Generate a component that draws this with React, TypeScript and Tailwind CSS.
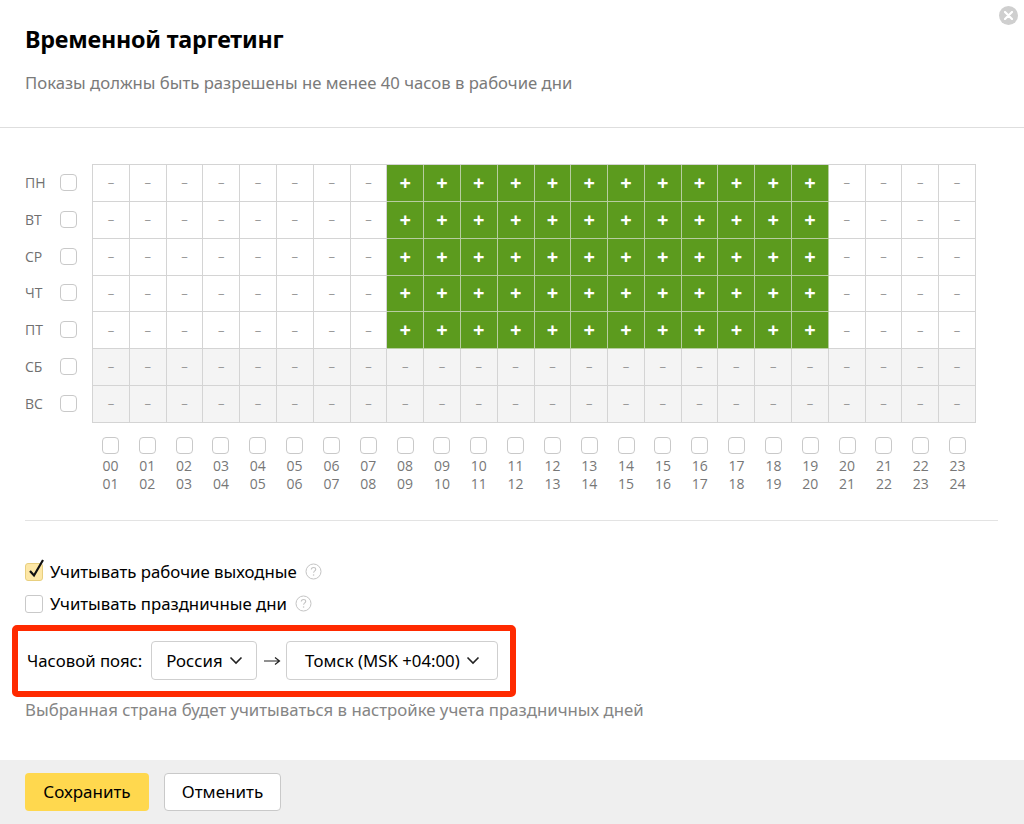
import React from "react";

const days = ["ПН", "ВТ", "СР", "ЧТ", "ПТ", "СБ", "ВС"];
const hours = Array.from({ length: 24 }, (_, i) => i);
const pad = (n: number) => (n < 10 ? "0" + n : "" + n);

function Box({ className = "" }: { className?: string }) {
  return <div className={"w-[17px] h-[17px] rounded-[4px] border border-[#c9c9c9] bg-white " + className} />;
}

function Chevron() {
  return (
    <svg width="14" height="9" viewBox="0 0 14 9" className="ml-[6px]">
      <path d="M1.5 1.5 L7 7 L12.5 1.5" fill="none" stroke="#222" strokeWidth="1.6" />
    </svg>
  );
}

function Help() {
  return (
    <svg width="17" height="17" viewBox="0 0 17 17" className="ml-[8px]">
      <circle cx="8.5" cy="8.5" r="7.5" fill="none" stroke="#c4c4c4" strokeWidth="1" />
      <path d="M6.3 6.6 C6.3 5.2 7.3 4.5 8.5 4.5 C9.8 4.5 10.7 5.3 10.7 6.4 C10.7 7.8 8.6 8 8.6 9.8" fill="none" stroke="#c4c4c4" strokeWidth="1.1" />
      <circle cx="8.6" cy="12" r="0.8" fill="#c4c4c4" />
    </svg>
  );
}

export default function App() {
  return (
    <div className="relative w-[1024px] h-[824px] bg-white flex flex-col font-['Noto_Sans',sans-serif] text-black overflow-hidden">
      <button className="absolute top-[6px] right-[6px] w-[19px] h-[19px] rounded-full bg-[#cfcfcf] flex items-center justify-center">
        <svg width="9" height="9" viewBox="0 0 9 9">
          <path d="M1 1 L8 8 M8 1 L1 8" stroke="white" strokeWidth="2.2" strokeLinecap="round" />
        </svg>
      </button>

      <div className="h-[128px] shrink-0 border-b border-[#dedede] px-[25px] pt-[22px]">
        <h1 className="text-[23.3px] leading-[34px] font-bold tracking-[-0.2px]">Временной таргетинг</h1>
        <p className="mt-[16px] text-[16.7px] leading-[22px] text-[#7a7a7a]">
          Показы должны быть разрешены не менее 40 часов в рабочие дни
        </p>
      </div>

      <div className="flex-1 px-[25px] pt-[36px]">
        <div className="flex font-['Open_Sans',sans-serif]">
          <div className="w-[67px] flex flex-col">
            {days.map((d) => (
              <div key={d} className="h-[36.85px] flex items-center">
                <span className="w-[35px] text-[14px] text-[#707070]">{d}</span>
                <Box />
              </div>
            ))}
          </div>
          <div className="w-[884px] grid grid-cols-[repeat(24,minmax(0,1fr))] border-l border-t border-[#d4d4d4]">
            {days.map((d, r) =>
              hours.map((h) => {
                const on = r < 5 && h >= 8 && h < 20;
                const weekend = r >= 5;
                return (
                  <div
                    key={d + h}
                    className={
                      "h-[36.85px] flex items-center justify-center border-r border-b " +
                      (on
                        ? "bg-[#5c9b1e] border-[#b7cda0] text-white text-[20px] font-bold"
                        : weekend
                        ? "bg-[#f4f4f4] border-[#d4d4d4] text-[#9a9a9a] text-[13px]"
                        : "bg-white border-[#d4d4d4] text-[#9a9a9a] text-[13px]")
                    }
                  >
                    {on ? "+" : "–"}
                  </div>
                );
              })
            )}
          </div>
        </div>

        <div className="flex font-['Open_Sans',sans-serif] mt-[14px]">
          <div className="w-[67px]" />
          <div className="w-[884px] grid grid-cols-[repeat(24,minmax(0,1fr))]">
            {hours.map((h) => (
              <div key={h} className="flex flex-col items-center">
                <Box />
                <div className="mt-[3px] text-[14px] leading-[18px] text-[#777]">{pad(h)}</div>
                <div className="text-[14px] leading-[18px] text-[#777]">{pad(h + 1)}</div>
              </div>
            ))}
          </div>
        </div>

        <div className="mt-[27px] w-[973px] border-t border-[#e3e3e3]" />

        <div className="mt-[35px] flex items-center h-[32px] text-[16.8px]">
          <div className="w-[18px] h-[18px] rounded-[3px] bg-[#fde7a6] border border-[#e8cf7f] relative">
            <svg width="18" height="22" viewBox="0 0 18 22" className="absolute left-[1px] top-[-7px]">
              <path d="M3 14 L7 18.5 L16 3" fill="none" stroke="#111" strokeWidth="2.2" />
            </svg>
          </div>
          <span className="ml-[7px]">Учитывать рабочие выходные</span>
          <Help />
        </div>
        <div className="flex items-center h-[32px] text-[16.8px]">
          <div className="w-[18px] h-[18px] rounded-[3px] bg-white border border-[#c9c9c9]" />
          <span className="ml-[7px]">Учитывать праздничные дни</span>
          <Help />
        </div>

        <div className="mt-[5px] ml-[-13px] w-[504px] h-[72px] border-[6px] border-[#ff2a00] rounded-[5px] flex items-center pl-[9px] text-[16.8px]">
          <span>Часовой пояс:</span>
          <button className="ml-[9px] h-[39px] w-[106px] border border-[#cfcfcf] rounded-[4px] flex items-center justify-center bg-white">
            Россия
            <Chevron />
          </button>
          <span className="w-[29px] flex justify-center">
            <svg width="18" height="10" viewBox="0 0 18 10">
              <path d="M1 5 H16 M12 1.5 L16.5 5 L12 8.5" fill="none" stroke="#222" strokeWidth="1.2" />
            </svg>
          </span>
          <button className="h-[39px] w-[212px] border border-[#cfcfcf] rounded-[4px] flex items-center justify-center bg-white">
            Томск (MSK +04:00)
            <Chevron />
          </button>
        </div>
        <p className="mt-[2px] text-[16.8px] leading-[22px] text-[#858585]">
          Выбранная страна будет учитываться в настройке учета праздничных дней
        </p>
      </div>

      <div className="h-[64px] shrink-0 bg-[#efefef] flex items-center px-[25px] gap-[15px]">
        <button className="h-[38px] w-[124px] rounded-[4px] bg-[#ffd84e] text-[17px]">Сохранить</button>
        <button className="h-[38px] w-[117px] rounded-[4px] bg-white border border-[#c9c9c9] text-[17px]">Отменить</button>
      </div>
    </div>
  );
}
